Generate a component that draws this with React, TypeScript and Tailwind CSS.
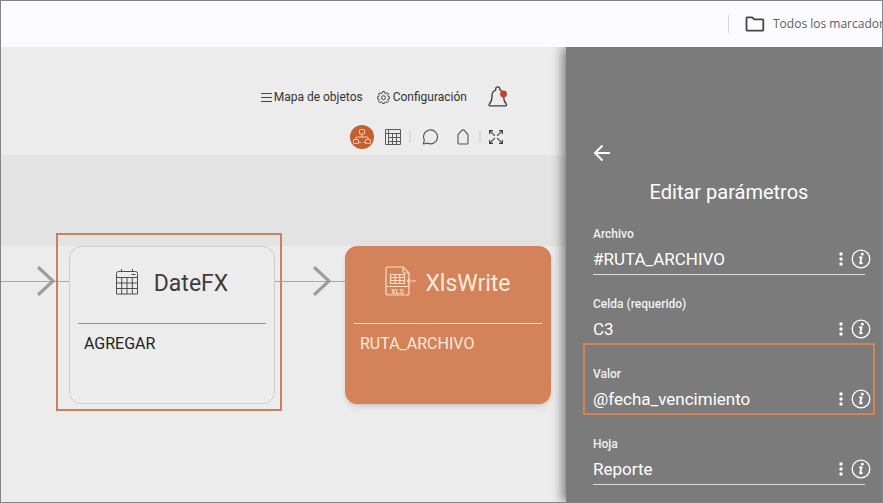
import { ReactNode } from "react";

type Field = {
  id: string;
  label: string;
  value: string;
  active?: boolean;
};

const fields: Field[] = [
  { id: "archivo", label: "Archivo", value: "#RUTA_ARCHIVO" },
  { id: "celda", label: "Celda (requerido)", value: "C3" },
  { id: "valor", label: "Valor", value: "@fecha_vencimiento", active: true },
  { id: "hoja", label: "Hoja", value: "Reporte" },
];

function FolderIcon() {
  return (
    <svg width="20" height="16" viewBox="0 0 20 16" fill="none" stroke="#45454b" strokeWidth="1.8" strokeLinejoin="round">
      <path d="M1.5 2.2a.8.8 0 0 1 .8-.8h4.9l2 2h8.3a.8.8 0 0 1 .8.8v9.6a.8.8 0 0 1-.8.8H2.3a.8.8 0 0 1-.8-.8Z" />
    </svg>
  );
}

function GearIcon() {
  return (
    <svg width="13" height="13" viewBox="0 0 24 24" fill="none" stroke="#444" strokeWidth="1.8" strokeLinejoin="round">
      <path d="M10.2 1h3.6l.6 3 2 .9 2.6-1.7 2.5 2.5-1.7 2.6.9 2 3 .6v3l-3 .6-.9 2 1.7 2.6-2.5 2.5-2.6-1.7-2 .9-.6 2.2h-3.6l-.6-2.2-2-.9L5 21.6l-2.5-2.5 1.7-2.6-.9-2-3-.6v-3l3-.6.9-2-1.7-2.6L5 3.2l2.6 1.7 2-.9Z" />
      <circle cx="12" cy="12.3" r="3.6" />
    </svg>
  );
}

function BellIcon() {
  return (
    <svg width="22" height="22" viewBox="0 0 22 22" fill="none" stroke="#3c3c3c" strokeWidth="1.3" strokeLinejoin="round">
      <path d="M8.7 4.2c-2.600.9-3.700 3-3.700 5.800 0 3.500-.4 5.500-2.300 7.500-.9.900-1 2.300.2 2.300h15.800c1.200 0 1.100-1.400.2-2.300-1.900-2-2.300-4-2.300-7.500 0-2.800-1.100-4.900-3.700-5.800" />
      <path d="M8.7 4.3V3a2.1 2.1 0 0 1 4.2 0v1.3" />
      <circle cx="16.5" cy="8" r="3.4" fill="#c5412c" stroke="none" />
    </svg>
  );
}

function TreeIcon() {
  return (
    <svg width="20" height="18" viewBox="0 0 20 18" fill="none" stroke="#f6cdb4" strokeWidth="1">
      <rect x="7.5" y="1.5" width="5" height="4.5" rx=".8" />
      <path d="M10 6v3M4 11.500V10a1 1 0 0 1 1-1h10a1 1 0 0 1 1 1v1.500" />
      <rect x="1.5" y="11.5" width="5" height="4" rx=".6" />
      <rect x="13.5" y="11.5" width="5" height="4" rx=".6" />
      <path d="M6.5 14.5H9M11 14.5h2.5" />
    </svg>
  );
}

function TableIcon() {
  return (
    <svg width="16" height="16" viewBox="0 0 16 16" fill="none" stroke="#5a5a5a" strokeWidth="1">
      <path d="M.5.5h15v15H.5ZM3.500.5v15M.5 4.500h15M7.500 4.500v11M11.500 4.500v11M3.500 8.500h12M3.500 12.500h12" />
    </svg>
  );
}

function ChatIcon() {
  return (
    <svg width="17" height="16" viewBox="0 0 17 16" fill="none" stroke="#555" strokeWidth="1.1" strokeLinejoin="round">
      <path d="M1.3 15 2.4 11.2a7 7 0 1 1 3 2.900Z" />
    </svg>
  );
}

function TagIcon() {
  return (
    <svg width="12" height="16" viewBox="0 0 12 16" fill="none" stroke="#555" strokeWidth="1.1" strokeLinejoin="round">
      <path d="M1 5.6 4.8 1.4a1.6 1.6 0 0 1 2.4 0L11 5.600V14a1 1 0 0 1-1 1H2a1 1 0 0 1-1-1Z" />
    </svg>
  );
}

function ExpandIcon() {
  return (
    <svg width="14" height="14" viewBox="0 0 14 14" fill="none" stroke="#3c3c3c" strokeWidth="1.1">
      <path d="M.6 4V.6H4M10 .6h3.400V4M13.400 10v3.400H10M4 13.400H.6V10" />
      <path d="m.8.8 5 5M13.200.8l-5 5M13.200 13.200l-5-5M.8 13.200l5-5" />
    </svg>
  );
}

function CalendarIcon() {
  return (
    <svg width="22" height="27" viewBox="0 0 22 27" fill="none" stroke="#4d4d4d" strokeWidth="1">
      <path d="M2.5 3.500h17a2 2 0 0 1 2 2V26H.5V5.500a2 2 0 0 1 2-2ZM5.500 1v2.500M16.500 1v2.500" />
      <path d="M.5 9.500h21M.5 15h21M.5 20.500h21M5.700 9.500V26M11 9.500V26M16.300 9.500V26M15.500 6.500h4" />
    </svg>
  );
}

function XlsIcon() {
  return (
    <svg width="32" height="30" viewBox="0 0 32 30" fill="none" stroke="#fbdcc6" strokeWidth="1.2" strokeLinejoin="round">
      <path d="M24 13V7l-6-6H3a2 2 0 0 0-2 2v24a2 2 0 0 0 2 2h19a2 2 0 0 0 2-2V17M18 1v4.500A1.500 1.500 0 0 0 19.500 7H24M1 20.500h23" />
      <path d="M5.5 8.500h14v9h-14ZM5.500 11.500h14M5.500 14.500h14M10.200 8.500v9M14.800 8.500v9M31 15h-8.500M25 12.500 22.500 15l2.500 2.500" />
      <text x="12.5" y="27.5" textAnchor="middle" fill="#fbdcc6" stroke="none" fontSize="7" fontWeight="700" fontFamily="Roboto, sans-serif">
        XLS
      </text>
    </svg>
  );
}

function InfoIcon() {
  return (
    <svg width="20" height="20" viewBox="0 0 20 20" fill="none" stroke="white" strokeWidth="1.3">
      <circle cx="10" cy="10" r="8.8" />
      <path d="M8 8.300h2.600L9.200 13.700c-.2 1 .8 1 2.200-.2" strokeWidth="1.8" />
      <circle cx="11.3" cy="5.2" r="1.4" fill="white" stroke="none" />
    </svg>
  );
}

function Connector({ className }: { className: string }) {
  return (
    <div className={`relative flex h-[70px] shrink-0 items-center ${className}`}>
      <div className="h-px w-full bg-[#a8a8a8]" />
      <svg className="absolute right-3.5" width="18" height="32" viewBox="0 0 18 32" fill="none" stroke="#9c9c9c" strokeWidth="3.2" strokeLinecap="round">
        <path d="m2 3 14 13L2 29" />
      </svg>
    </div>
  );
}

type NodeCardProps = {
  icon: ReactNode;
  title: string;
  text: string;
  selected?: boolean;
  highlighted?: boolean;
};

function NodeCard({ icon, title, text, selected, highlighted }: NodeCardProps) {
  return (
    <article
      className={`relative h-[158px] w-[206px] shrink-0 rounded-xl border px-2 ${
        selected
          ? "border-[#d48259] bg-[#d48259] text-[#fdeadb] shadow-md"
          : "border-[#cfcfcf] bg-[#ececec] text-[#3c3c41]"
      }`}
    >
      <div className={`flex h-[77px] items-center justify-center border-b ${selected ? "gap-2 border-[#fdeadb]" : "gap-4 border-[#8f8f8f]"}`}>
        <span className="pb-2">{icon}</span>
        <h2 className="pb-0.5 text-[23px] leading-7">{title}</h2>
      </div>
      <p className={`px-1.5 pt-2 text-base ${selected ? "" : "text-[#222]"}`}>{text}</p>
      {highlighted && <div className="absolute -top-3.5 -right-2 -bottom-2 -left-3.5 border-2 border-[#cb7f61]" />}
    </article>
  );
}

function ParamField({ id, label, value, active }: Field) {
  return (
    <div className="relative pt-[21px]">
      <label htmlFor={id} className="block text-xs leading-4 font-medium text-[#f0f0f0]">
        {label}
      </label>
      <div className="mt-[5px] flex h-6 items-center">
        <input id={id} defaultValue={value} className="w-full min-w-0 flex-1 bg-transparent text-[17px] leading-6 text-white outline-none" />
        <button type="button" aria-label="Opciones" className="flex w-4 justify-center">
          <svg width="4" height="14" viewBox="0 0 4 14" fill="white">
            <circle cx="2" cy="2" r="1.7" />
            <circle cx="2" cy="7" r="1.7" />
            <circle cx="2" cy="12" r="1.7" />
          </svg>
        </button>
        <button type="button" aria-label="Información" className="ml-0.5">
          <InfoIcon />
        </button>
      </div>
      <div className="mt-[3px] mr-1.5 h-px bg-[#dcdcdc]" />
      {active && <div className="pointer-events-none absolute -top-0.5 -right-1 bottom-0 -left-2.5 border-2 border-[#d3835a]" />}
    </div>
  );
}

export default function App() {
  return (
    <div className="flex min-h-screen flex-col overflow-hidden border border-[#858587] bg-[#ececec] font-[Roboto,sans-serif]">
      <header className="relative z-10 flex h-[46px] items-center justify-end bg-[#fcfbff]">
        <div className="h-[18px] w-px bg-[#d6d6e0]" />
        <a href="#" className="ml-4 flex w-[137px] items-center gap-2 overflow-hidden font-['Open_Sans',sans-serif] text-xs whitespace-nowrap text-[#5c5c61]">
          <span className="shrink-0">
            <FolderIcon />
          </span>
          Todos los marcadores
        </a>
      </header>

      <div className="flex flex-1">
        <main className="min-w-0 flex-1 overflow-hidden">
          <div className="flex h-[108px] flex-col items-end pt-9 pr-[57px]">
            <nav className="flex h-7 items-center text-xs text-[#333]">
              <button type="button" className="flex items-center gap-0.5">
                <svg width="11" height="9" viewBox="0 0 11 9" stroke="#444">
                  <path d="M0 .5h11M0 4.500h11M0 8.500h11" />
                </svg>
                Mapa de objetos
              </button>
              <button type="button" className="ml-3.5 flex items-center gap-[3px]">
                <GearIcon />
                Configuración
              </button>
              <button type="button" aria-label="Notificaciones" className="ml-5">
                <BellIcon />
              </button>
            </nav>
            <div className="mt-3.5 flex h-6 items-center pr-1.5">
              <button type="button" aria-label="Diagrama" className="flex size-6 items-center justify-center rounded-full bg-[#c4602f]">
                <TreeIcon />
              </button>
              <button type="button" aria-label="Tabla" className="ml-[11px]">
                <TableIcon />
              </button>
              <div className="ml-2 h-3 w-0.5 bg-[#dcdcdc]" />
              <button type="button" aria-label="Comentarios" className="ml-[11px]">
                <ChatIcon />
              </button>
              <button type="button" aria-label="Etiqueta" className="ml-[18px]">
                <TagIcon />
              </button>
              <div className="ml-2.5 h-3 w-0.5 bg-[#dcdcdc]" />
              <button type="button" aria-label="Pantalla completa" className="ml-2">
                <ExpandIcon />
              </button>
            </div>
          </div>

          <div className="h-[91px] bg-[#e3e3e3]" />

          <div className="flex items-start">
            <Connector className="w-[68px]" />
            <NodeCard icon={<CalendarIcon />} title="DateFX" text="AGREGAR" highlighted />
            <Connector className="w-[70px]" />
            <NodeCard icon={<XlsIcon />} title="XlsWrite" text="RUTA_ARCHIVO" selected />
          </div>
        </main>

        <aside className="relative w-[316px] shrink-0 bg-[#7b7b7b] pt-24 pr-[11px] pl-[27px] text-white shadow-[-4px_0_10px_rgba(0,0,0,0.45)]">
          <button type="button" aria-label="Volver" className="block">
            <svg width="18" height="20" viewBox="0 0 18 20" fill="none" stroke="white" strokeWidth="2">
              <path d="M17 10H2.500M9.500 2.500 2 10l7.500 7.500" />
            </svg>
          </button>
          <h1 className="mt-4 pr-1.5 text-center text-xl leading-[26px]">Editar parámetros</h1>
          {fields.map((field) => (
            <ParamField key={field.id} {...field} />
          ))}
        </aside>
      </div>
    </div>
  );
}
